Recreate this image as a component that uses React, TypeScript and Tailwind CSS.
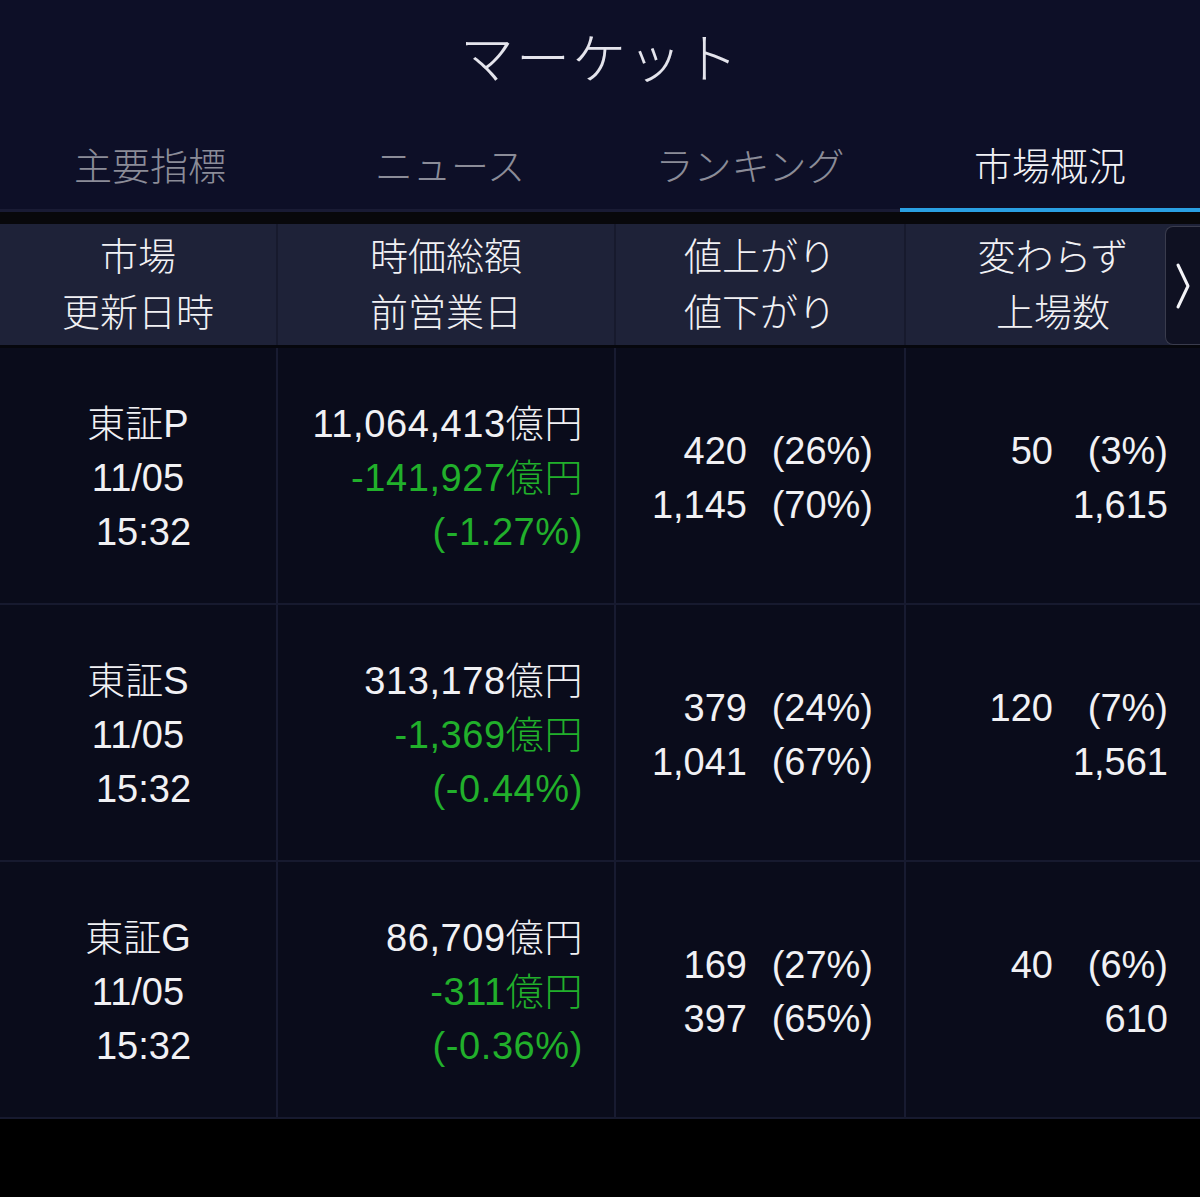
const tabs = ["主要指標", "ニュース", "ランキング", "市場概況"];

const rows = [
  {
    name: "東証P",
    cap: "11,064,413億円",
    diff: "-141,927億円",
    pct: "(-1.27%)",
    up: "420",
    upPct: "(26%)",
    down: "1,145",
    downPct: "(70%)",
    flat: "50",
    flatPct: "(3%)",
    listed: "1,615",
  },
  {
    name: "東証S",
    cap: "313,178億円",
    diff: "-1,369億円",
    pct: "(-0.44%)",
    up: "379",
    upPct: "(24%)",
    down: "1,041",
    downPct: "(67%)",
    flat: "120",
    flatPct: "(7%)",
    listed: "1,561",
  },
  {
    name: "東証G",
    cap: "86,709億円",
    diff: "-311億円",
    pct: "(-0.36%)",
    up: "169",
    upPct: "(27%)",
    down: "397",
    downPct: "(65%)",
    flat: "40",
    flatPct: "(6%)",
    listed: "610",
  },
];

export default function App() {
  return (
    <div className="w-[1200px] h-[1197px] bg-black text-[#f1f1f4] font-['Liberation_Sans','Noto_Sans_CJK_JP',sans-serif] overflow-hidden">
      {/* Title + tabs */}
      <div className="bg-[#0d0f27]">
        <h1 className="h-[120px] flex items-center justify-center text-[54px] font-light tracking-[2px] text-[#e4e4ec]">
          マーケット
        </h1>
        <div className="grid grid-cols-4 h-[92px] border-b-[3px] border-[#191b34]">
          {tabs.map((t, i) => (
            <div
              key={t}
              className={`relative flex items-center justify-center pt-[6px] text-[38px] font-light ${
                i === 3 ? "text-[#f2f2f6]" : "text-[#8b8c98]"
              }`}
            >
              {t}
              {i === 3 && <div className="absolute left-0 right-0 bottom-[-3px] h-[4px] bg-[#2aa0e2]"></div>}
            </div>
          ))}
        </div>
      </div>

      <div className="h-[12px] bg-[#08080b]"></div>

      {/* Header row */}
      <div className="relative h-[121px] bg-[#1e2238] grid grid-cols-[278px_338px_290px_294px] text-[38px] font-light leading-[56px] text-center">
        <div className="flex flex-col justify-center border-r-2 border-[#171a2d]">
          <div>市場</div>
          <div>更新日時</div>
        </div>
        <div className="flex flex-col justify-center border-r-2 border-[#171a2d]">
          <div>時価総額</div>
          <div>前営業日</div>
        </div>
        <div className="flex flex-col justify-center border-r-2 border-[#171a2d]">
          <div>値上がり</div>
          <div>値下がり</div>
        </div>
        <div className="flex flex-col justify-center">
          <div>変わらず</div>
          <div>上場数</div>
        </div>

        {/* scroll arrow */}
        <div className="absolute right-0 top-[2px] bottom-0 w-[35px] bg-[#0f1122] border border-r-0 border-[#3a3c4d] rounded-l-[8px] flex items-center justify-center">
          <svg width="16" height="48" viewBox="0 0 16 48" fill="none">
            <polyline points="3,3 13,24 3,45" stroke="#f4f4f8" strokeWidth="3" strokeLinecap="round" strokeLinejoin="round" />
          </svg>
        </div>
      </div>

      <div className="h-[3px] bg-[#06070d]"></div>

      {/* Data rows */}
      {rows.map((r) => (
        <div
          key={r.name}
          className="h-[257px] bg-[#0a0c1b] grid grid-cols-[278px_338px_290px_294px] border-b-2 border-[#171a2f] text-[38px] font-light leading-[54px]"
        >
          <div className="flex flex-col justify-center items-center pt-[4px] border-r-2 border-[#181b31]">
            <div>{r.name}</div>
            <div>11/05</div>
            <div className="pl-[11px]">15:32</div>
          </div>
          <div className="flex flex-col justify-center items-end pt-[4px] pr-[31px] border-r-2 border-[#181b31] tracking-[0.6px]">
            <div>{r.cap}</div>
            <div className="text-[#21b02b]">{r.diff}</div>
            <div className="text-[#21b02b]">{r.pct}</div>
          </div>
          <div className="flex flex-col justify-center pt-[4px] pr-[31px] border-r-2 border-[#181b31]">
            <div className="grid grid-cols-[1fr_126px] text-right">
              <div>{r.up}</div>
              <div>{r.upPct}</div>
              <div>{r.down}</div>
              <div>{r.downPct}</div>
            </div>
          </div>
          <div className="flex flex-col justify-center pt-[4px] pr-[32px]">
            <div className="grid grid-cols-[1fr_115px] text-right">
              <div>{r.flat}</div>
              <div>{r.flatPct}</div>
            </div>
            <div className="text-right">{r.listed}</div>
          </div>
        </div>
      ))}
    </div>
  );
}
